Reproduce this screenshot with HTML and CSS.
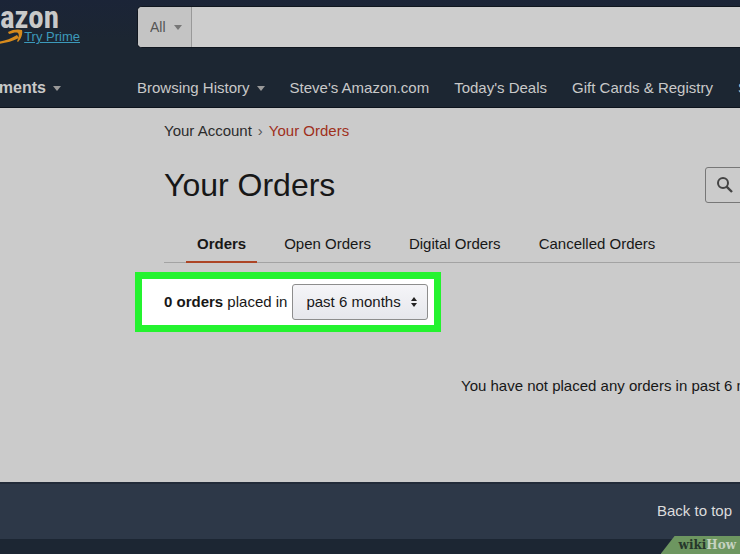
FILE: index.html
```html
<!DOCTYPE html>
<html lang="en">
<head>
    <meta charset="UTF-8">
    <meta name="viewport" content="width=device-width, initial-scale=1.0">
    <title>Your Orders</title>
    <link rel="stylesheet" href="styles.css">
</head>
<body>
    <header class="header">
        <div class="header-top">
            <div class="brand">
                <a class="logo" href="#">amazon</a>
                <div class="prime">
                    <svg class="smile" width="60" height="16" viewBox="0 0 60 16" aria-hidden="true">
                        <path d="M0 5C16 15 36 17 54 6L56 9C38 18 16 17 0 5Z" fill="#d68a1c"/>
                        <path d="M45 3C50 0 56 0 59 1C60 5 58 10 55 13C54 13 54 12 55 10C56 7 56 5 55 4C53 3 50 4 46 5Z" fill="#d68a1c"/>
                    </svg>
                    <a class="try-prime" href="#">Try Prime</a>
                </div>
            </div>
            <form class="search">
                <div class="search-scope">
                    <select aria-label="Search in">
                        <option>All</option>
                    </select>
                    <span class="caret"></span>
                </div>
                <input class="search-text" type="text" aria-label="Search">
            </form>
        </div>
        <nav class="nav">
            <div class="nav-side">
                <a class="departments" href="#">Departments <span class="caret"></span></a>
            </div>
            <div class="nav-links">
                <a href="#">Browsing History <span class="caret"></span></a>
                <a href="#">Steve's Amazon.com</a>
                <a href="#">Today's Deals</a>
                <a href="#">Gift Cards &amp; Registry</a>
                <a href="#">Sell</a>
            </div>
        </nav>
    </header>

    <main class="main">
        <div class="breadcrumb">
            <a href="#">Your Account</a>
            <span class="separator">›</span>
            <span class="current">Your Orders</span>
        </div>

        <div class="title-row">
            <h1>Your Orders</h1>
            <form class="order-search">
                <label for="order-query">
                    <svg width="16" height="16" viewBox="0 0 16 16" fill="none" stroke="#444" stroke-width="2" role="img" aria-label="Search orders">
                        <circle cx="6" cy="6" r="5"/>
                        <path d="M9.6 9.6L15 15" stroke-width="2.4"/>
                    </svg>
                </label>
                <input id="order-query" type="text">
            </form>
        </div>

        <nav class="tabs">
            <a class="active" href="#">Orders</a>
            <a href="#">Open Orders</a>
            <a href="#">Digital Orders</a>
            <a href="#">Cancelled Orders</a>
        </nav>

        <div class="filter">
            <label for="period"><b>0 orders</b> placed in</label>
            <div class="period">
                <select id="period">
                    <option>past 6 months</option>
                </select>
                <svg width="6" height="10" viewBox="0 0 6 10" fill="#222" aria-hidden="true">
                    <path d="M0 4L3 0L6 4ZM0 6L3 10L6 6Z"/>
                </svg>
            </div>
        </div>

        <p class="empty">You have not placed any orders in past 6 months.</p>
    </main>

    <footer class="footer">
        <a class="back-to-top" href="#">Back to top</a>
        <div class="footer-bottom"></div>
        <div class="badge"><span>wiki</span>How</div>
    </footer>
</body>
</html>
```
FILE: styles.css
```css
* {
    box-sizing: border-box;
}
body {
    margin: 0;
    min-height: 100vh;
    display: flex;
    flex-direction: column;
    font-family: "Liberation Sans", Arial, sans-serif;
    font-size: 15px;
    line-height: 20px;
    color: #171717;
    background-color: #cbcbcb;
    overflow-x: hidden;
}
a {
    color: inherit;
    text-decoration: none;
}
select,
input {
    font: inherit;
    color: inherit;
    border: none;
    border-radius: 0;
    outline: none;
    margin: 0;
    appearance: none;
}
.caret {
    display: inline-block;
    border: 4px solid transparent;
    border-top: 5px solid #999;
    border-bottom: 0;
}

/* header */
.header {
    background: linear-gradient(#1b2437, #1c2632 40px);
    border-bottom: 1px solid #0d131c;
    color: #c9c9c9;
    overflow: hidden;
}
.header-top {
    display: flex;
    padding-top: 6px;
}
.brand {
    flex: 0 0 137px;
    min-width: 0;
    display: flex;
    flex-direction: column;
    align-items: flex-end;
    height: 62px;
}
.logo {
    margin-right: 78px;
    font-family: "Liberation Sans Narrow", "Roboto Condensed", "Open Sans Condensed", "Liberation Sans", sans-serif;
    font-size: 31px;
    font-weight: bold;
    line-height: 23px;
}
.prime {
    display: flex;
    align-items: center;
    margin-right: 57px;
}
.smile {
    flex: none;
    margin-right: 1px;
}
.try-prime {
    font-size: 13px;
    line-height: 14px;
    color: #3c9abb;
    text-decoration: underline;
    white-space: nowrap;
}
.search {
    flex: 1;
    display: flex;
    height: 42px;
    border: 1px solid #10161f;
    border-right: 0;
    border-radius: 5px 0 0 5px;
    overflow: hidden;
    background-color: #cdcdcd;
}
.search-scope {
    position: relative;
    width: 54px;
    background-color: #c4c4c4;
    border-right: 1px solid #999;
}
.search-scope select {
    width: 100%;
    height: 100%;
    padding: 0 12px;
    font-size: 14px;
    color: #555;
    background: none;
}
.search-scope .caret {
    position: absolute;
    right: 9px;
    top: 18px;
    border-top-color: #777;
    pointer-events: none;
}
.search-text {
    flex: 1;
    min-width: 0;
    background: none;
}
.nav {
    display: flex;
    padding: 10px 0 9px;
    white-space: nowrap;
}
.nav a {
    display: flex;
    align-items: center;
    gap: 7px;
}
.nav-side {
    flex: 0 0 137px;
    min-width: 0;
    display: flex;
    justify-content: flex-end;
    padding-right: 76px;
}
.departments {
    font-size: 16px;
    font-weight: bold;
}
.nav-links {
    display: flex;
    gap: 25px;
}

/* orders */
.main {
    flex: 1;
    padding: 13px 0 20px 164px;
    overflow: hidden;
}
.breadcrumb {
    display: flex;
    gap: 6px;
    color: #2b2b2b;
}
.separator {
    color: #555;
}
.current {
    color: #9f301b;
}
.title-row {
    display: flex;
    justify-content: space-between;
    align-items: center;
    margin-top: 26px;
}
h1 {
    margin: 0;
    font-size: 32px;
    font-weight: normal;
    line-height: 36px;
}
.order-search {
    display: flex;
    align-items: center;
    width: 240px;
    height: 36px;
    margin-right: -205px;
    padding-left: 11px;
    border: 1px solid #777;
    border-radius: 3px;
}
.order-search label {
    display: flex;
}
.order-search input {
    flex: 1;
    min-width: 0;
    margin-left: 10px;
    background: none;
}
.tabs {
    display: flex;
    gap: 16px;
    margin-top: 29px;
    padding-left: 22px;
    border-bottom: 1px solid #a3a3a3;
    white-space: nowrap;
}
.tabs a {
    padding: 2px 11px 7px;
    border-bottom: 2px solid transparent;
    margin-bottom: -1px;
}
.tabs .active {
    font-weight: bold;
    border-bottom-color: #ad4525;
}
.filter {
    display: inline-flex;
    align-items: center;
    gap: 5px;
    margin: 9px 0 0 -29px;
    padding: 5px 6px 5px 22px;
    border: 7px solid #24f32f;
    background-color: #fff;
    white-space: nowrap;
}
.period {
    position: relative;
}
.period select {
    width: 136px;
    height: 36px;
    padding: 0 13px;
    border: 1px solid #8d8d8d;
    border-radius: 3px;
    background: linear-gradient(#f5f5f8, #e6e7ec);
}
.period svg {
    position: absolute;
    right: 11px;
    top: 13px;
    pointer-events: none;
}
.empty {
    margin: 44px 0 0 297px;
    white-space: nowrap;
}

/* footer */
.footer {
    position: relative;
    color: #dcdcdc;
}
.back-to-top {
    display: block;
    padding: 17px 8px 18px;
    border-top: 2px solid #222b39;
    background-color: #2d3848;
    text-align: right;
}
.footer-bottom {
    height: 15px;
    background-color: #1c2633;
}
.badge {
    position: absolute;
    right: 0;
    bottom: 0;
    height: 18px;
    padding: 0 4px 0 18px;
    background-color: #6d9660;
    clip-path: polygon(14px 0, 100% 0, 100% 100%, 0 100%);
    font-family: "DejaVu Serif", serif;
    font-size: 12px;
    font-weight: bold;
    line-height: 18px;
    color: #c5d2c0;
}
.badge span {
    color: #26372b;
}
```
